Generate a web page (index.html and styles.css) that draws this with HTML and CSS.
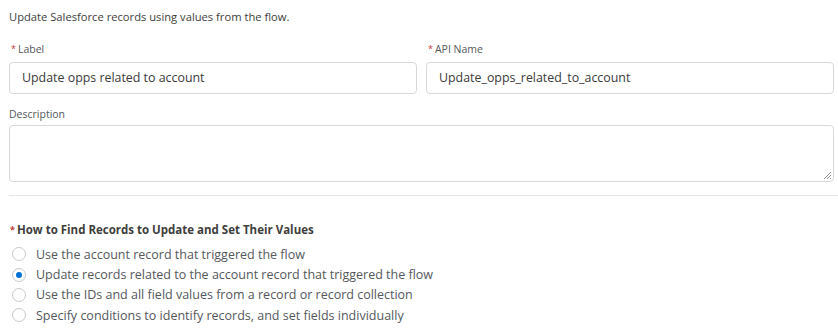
FILE: index.html
```html
<!DOCTYPE html>
<html lang="en">
<head>
    <meta charset="UTF-8">
    <title>Update Records</title>
    <link rel="stylesheet" href="styles.css">
</head>
<body>
    <div class="panel">
        <p class="intro">Update Salesforce records using values from the flow.</p>
        <div class="row">
            <div class="field">
                <label class="lbl"><abbr class="req">*</abbr>Label</label>
                <div class="input">Update opps related to account</div>
            </div>
            <div class="field">
                <label class="lbl"><abbr class="req">*</abbr>API Name</label>
                <div class="input">Update_opps_related_to_account</div>
            </div>
        </div>
        <div class="field desc">
            <label class="lbl">Description</label>
            <div class="textarea">
                <svg class="grip" width="9" height="9" viewBox="0 0 9 9">
                    <path d="M8 1L1 8M8 4L4 8M8 7L7 8" stroke="#8a8a8a" stroke-width="1" fill="none"/>
                </svg>
            </div>
        </div>
    </div>
    <div class="divider"></div>
    <div class="panel">
        <div class="group">
            <div class="heading"><abbr class="req">*</abbr>How to Find Records to Update and Set Their Values</div>
            <div class="radio"><span class="dot"></span>Use the account record that triggered the flow</div>
            <div class="radio"><span class="dot on"></span>Update records related to the account record that triggered the flow</div>
            <div class="radio"><span class="dot"></span>Use the IDs and all field values from a record or record collection</div>
            <div class="radio"><span class="dot"></span>Specify conditions to identify records, and set fields individually</div>
        </div>
    </div>
</body>
</html>
```

FILE: styles.css
```css
body {
    margin: 0;
    background: #fff;
    color: #3e3e3c;
    font-family: "Open Sans", "Noto Sans", sans-serif;
}

.panel {
    padding: 0 4px 0 9px;
}

.intro {
    margin: 0;
    padding-top: 9px;
    font-size: 11.2px;
    line-height: 16px;
}

.row {
    display: grid;
    grid-template-columns: 1fr 1fr;
    column-gap: 9px;
    margin-top: 17px;
}

.field {
    display: flex;
    flex-direction: column;
}

.lbl {
    font-size: 10.5px;
    line-height: 14px;
    color: #54585c;
    margin-bottom: 6px;
}

.req {
    color: #c23934;
    text-decoration: none;
    font-size: 9px;
    vertical-align: 1px;
    margin: 0 2px 0 2px;
}

.input {
    height: 32px;
    box-sizing: border-box;
    border: 1px solid #d8d8d8;
    border-radius: 4px;
    padding: 0 12px;
    font-size: 12.4px;
    line-height: 30px;
    color: #3a3a3a;
}

.desc {
    margin-top: 13px;
}

.desc .lbl {
    margin-bottom: 4px;
}

.textarea {
    position: relative;
    height: 57px;
    box-sizing: border-box;
    border: 1px solid #d8d8d8;
    border-radius: 4px;
}

.grip {
    position: absolute;
    right: 1px;
    bottom: 1px;
}

.divider {
    height: 1px;
    margin: 13px 0 0 9px;
    background: #e5e5e5;
}

.group {
    padding-top: 26px;
}

.heading {
    font-size: 11.5px;
    font-weight: 700;
    line-height: 16px;
    color: #3e3e3c;
    margin-bottom: 6px;
}

.heading .req {
    margin: 0 2px 0 1px;
}

.radio {
    display: flex;
    align-items: center;
    height: 20.4px;
    padding-left: 3px;
    font-size: 12.5px;
    color: #54585c;
}

.dot {
    width: 14px;
    height: 14px;
    box-sizing: border-box;
    border: 1px solid #c9c9c9;
    border-radius: 50%;
    margin-right: 10px;
    position: relative;
}

.dot.on::after {
    content: "";
    position: absolute;
    left: 3px;
    top: 3px;
    width: 6px;
    height: 6px;
    border-radius: 50%;
    background: #0070d2;
}
```
